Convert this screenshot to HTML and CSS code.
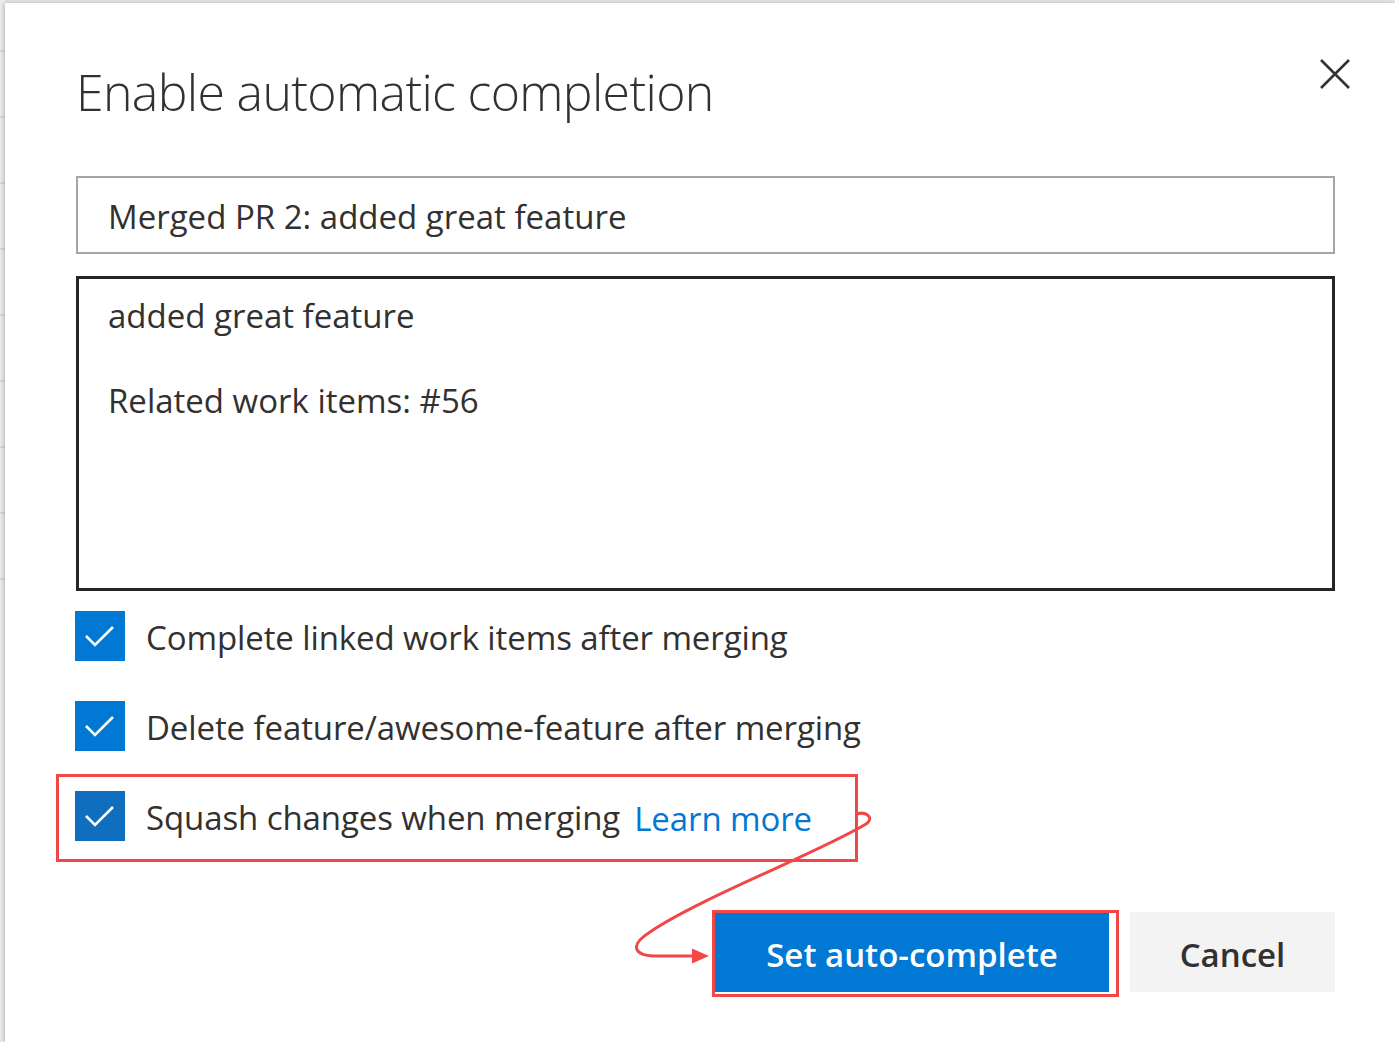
FILE: index.html
```html
<!DOCTYPE html>
<html lang="en">
<head>
<meta charset="utf-8">
<title>Enable automatic completion</title>
<link rel="stylesheet" href="styles.css">
</head>
<body>
<div class="backdrop">
  <span class="bd-line"></span><span class="bd-line"></span><span class="bd-line"></span><span class="bd-line"></span><span class="bd-line"></span><span class="bd-line"></span><span class="bd-line"></span><span class="bd-line"></span><span class="bd-line"></span>
</div>
<div class="dialog">
  <header class="dialog-header">
    <h1 class="dialog-title">Enable automatic completion</h1>
    <button class="close-btn" aria-label="Close">
      <svg width="30" height="30" viewBox="0 0 30 30"><path d="M1 1 L29 29 M29 1 L1 29" stroke="#333" stroke-width="2.6" fill="none"/></svg>
    </button>
  </header>

  <div class="field-input">Merged PR 2: added great feature</div>

  <div class="field-textarea">
    <p>added great feature</p>
    <p class="blank">&nbsp;</p>
    <p>Related work items: #56</p>
  </div>

  <ul class="options">
    <li class="option">
      <span class="checkbox"><svg width="50" height="50" viewBox="0 0 50 50"><path d="M11 25 L20 34 L38 16" stroke="#fff" stroke-width="2.6" fill="none"/></svg></span>
      <span class="option-label">Complete linked work items after merging</span>
    </li>
    <li class="option">
      <span class="checkbox"><svg width="50" height="50" viewBox="0 0 50 50"><path d="M11 25 L20 34 L38 16" stroke="#fff" stroke-width="2.6" fill="none"/></svg></span>
      <span class="option-label">Delete feature/awesome-feature after merging</span>
    </li>
    <li class="option option-highlight">
      <span class="checkbox checkbox-hover"><svg width="50" height="50" viewBox="0 0 50 50"><path d="M11 25 L20 34 L38 16" stroke="#fff" stroke-width="2.6" fill="none"/></svg></span>
      <span class="option-label">Squash changes when merging</span>
      <a class="learn-more" href="#">Learn more</a>
      <span class="annot-frame annot-frame-option"></span>
    </li>
  </ul>

  <div class="actions">
    <span class="primary-wrap">
      <button class="btn btn-primary">Set auto-complete</button>
      <span class="annot-frame annot-frame-btn"></span>
    </span>
    <button class="btn btn-default">Cancel</button>
  </div>

  <svg class="annot-arrow" width="1395" height="1042" viewBox="0 0 1395 1042">
    <path d="M857 814 C866 811 875 818 866 824 C820 852 700 898 650 932 C628 946 634 957 660 956 L696 956" stroke="#f24747" stroke-width="3" fill="none" stroke-linecap="round"/>
    <polygon points="692,948.5 709,956 692,963.5" fill="#f24747"/>
  </svg>
</div>
</body>
</html>
```

FILE: styles.css
```css
* { box-sizing: border-box; }

html, body {
  margin: 0;
  padding: 0;
  height: 100%;
}

body {
  background: #e4e4e4;
  font-family: "Open Sans", "Noto Sans", "Liberation Sans", sans-serif;
  color: #323130;
  display: flex;
  overflow: hidden;
}

.backdrop {
  width: 5px;
  flex: 0 0 5px;
  background: #eeeeee;
  display: flex;
  flex-direction: column;
  gap: 64px;
  padding-top: 50px;
}

.bd-line {
  display: block;
  height: 2px;
  background: #d9d9d9;
}

.dialog {
  position: relative;
  flex: 1;
  margin-top: 3px;
  height: 1039px;
  background: #fff;
  box-shadow: -2px 0 4px rgba(0, 0, 0, 0.18);
  padding: 0 60px 0 71px;
}

.dialog-header {
  display: flex;
  justify-content: space-between;
  align-items: flex-start;
  padding-top: 59px;
}

.dialog-title {
  margin: 0;
  font-weight: 300;
  font-size: 50px;
  line-height: 60px;
  color: #323130;
  letter-spacing: -0.65px;
}

.close-btn {
  border: 0;
  background: none;
  padding: 0;
  margin: -3px -15px 0 0;
  width: 30px;
  height: 30px;
  display: block;
}
.close-btn svg { display: block; }

.field-input {
  margin-top: 54px;
  height: 78px;
  border: 2px solid #a6a6a6;
  padding: 2px 30px 0;
  font-size: 33px;
  line-height: 74px;
  color: #323130;
}

.field-textarea {
  margin-top: 22px;
  height: 315px;
  border: 3px solid #252525;
  padding: 16px 29px;
  font-size: 33px;
  line-height: 42.5px;
}
.field-textarea p { margin: 0; }

.options {
  list-style: none;
  margin: 20px 0 0 -1px;
  padding: 0;
  display: flex;
  flex-direction: column;
  gap: 40px;
}

.option {
  position: relative;
  display: flex;
  align-items: center;
  width: fit-content;
  height: 50px;
  font-size: 33px;
}

.checkbox {
  width: 50px;
  height: 50px;
  background: #0078d4;
  flex: 0 0 50px;
  margin-right: 21px;
}
.checkbox svg { display: block; }
.checkbox-hover { background: #106ebe; }

.option-label {
  color: #323130;
  position: relative;
  top: 1px;
  letter-spacing: -0.1px;
}

.learn-more {
  margin-left: 14px;
  color: #0078d4;
  text-decoration: none;
  position: relative;
  top: 2px;
  letter-spacing: -0.1px;
}

.annot-frame {
  position: absolute;
  border: 3px solid #f24747;
  pointer-events: none;
}
.annot-frame-option {
  left: -19px;
  top: -17px;
  right: -46px;
  bottom: -21px;
}

.actions {
  display: flex;
  justify-content: flex-end;
  gap: 21px;
  margin-top: 71px;
}

.primary-wrap {
  position: relative;
  display: block;
}

.annot-frame-btn {
  left: -3px;
  top: -2px;
  right: -10px;
  bottom: -5px;
}

.btn {
  height: 80px;
  border: 0;
  font-family: inherit;
  font-size: 33px;
  font-weight: 600;
  padding: 4px 0 0;
  display: block;
}

.btn-primary {
  width: 394px;
  background: #0078d4;
  color: #fff;
}

.btn-default {
  width: 205px;
  background: #f3f3f3;
  color: #323130;
}

.annot-arrow {
  position: absolute;
  left: -5px;
  top: -3px;
  pointer-events: none;
}
```
